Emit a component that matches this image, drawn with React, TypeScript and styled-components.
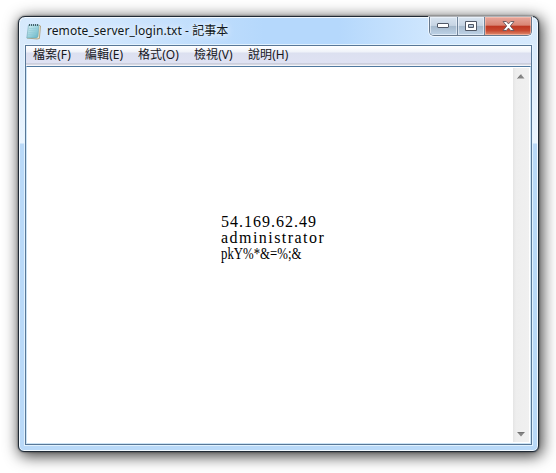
import React from "react";
import styled, { createGlobalStyle, css } from "styled-components";

const Global = createGlobalStyle`
  * { box-sizing: border-box; }
  body { margin: 0; background: #fff; overflow: hidden; font-family: "Noto Sans", "Noto Sans CJK TC", sans-serif; }
`;

const Desktop = styled.main`
  width: 556px;
  height: 473px;
  padding: 16px 17px 21px 18px;
  background: #fff;
`;

const Window = styled.section`
  width: 521px;
  height: 436px;
  display: flex;
  flex-direction: column;
  padding: 0 6px 6px;
  border: 1px solid #202a35;
  border-radius: 7px 7px 6px 6px;
  background:
    linear-gradient(#d5e9fc 0, #ddecfb 52px, #eaf5ff 126px, #b9d9f8 127px, #b9d9f8 100%) left / 7px 100% no-repeat,
    linear-gradient(#d5e9fc 0, #ddecfb 52px, #eaf5ff 126px, #b9d9f8 127px, #b9d9f8 100%) right / 7px 100% no-repeat,
    linear-gradient(90deg, #d7eafd 0, #d0e6fd 90px, #b5d8fc 245px, #b5d8fc 320px, #d0e7fe 415px, #d7eafd 100%) top / 100% 30px no-repeat,
    #b9d9f8;
  box-shadow:
    inset 0 0 0 1px rgba(247, 252, 255, 0.9),
    0 0 2px rgba(0, 0, 0, 0.65),
    2px 3px 15px 1px rgba(0, 0, 0, 0.78);
`;

const TitleBar = styled.header`
  height: 28px;
  flex: none;
  display: flex;
  align-items: flex-start;
  justify-content: space-between;
`;

const Title = styled.h1`
  display: flex;
  align-items: center;
  gap: 6px;
  margin: 2px 0 0 1px;
  height: 24px;
  font-size: 12px;
  font-weight: 400;
  line-height: 24px;
  color: #111820;
  white-space: nowrap;
  text-shadow: 0 0 8px #fff, 0 0 5px rgba(255, 255, 255, 0.7);
`;

const TitleText = styled.span`
  letter-spacing: 0.06px;
`;

const Controls = styled.div`
  display: flex;
  width: 103px;
  height: 19px;
  border: 1px solid #66788c;
  border-top: 0;
  border-radius: 0 0 5px 5px;
  overflow: hidden;
  box-shadow: 0 0 0 1px rgba(255, 255, 255, 0.65);
`;

const ControlButton = styled.button<{ $width: number; $close?: boolean }>`
  width: ${(p) => p.$width}px;
  flex: none;
  padding: 0;
  border: 0;
  border-right: 1px solid #70849a;
  display: grid;
  place-items: center;
  background: linear-gradient(#d8e4f0 0, #c7d5e4 47%, #a5b9cc 50%, #bdd2e7 100%);
  box-shadow: inset 0 0 0 1px rgba(244, 249, 255, 0.6);
  ${(p) =>
    p.$close &&
    css`
      border-right: 0;
      background: linear-gradient(#e7a79c 0, #d98574 46%, #bd3521 50%, #c84930 75%, #df8d70 100%);
      box-shadow: inset 0 0 0 1px rgba(255, 205, 190, 0.55);
    `}
`;

const Client = styled.div`
  flex: 1;
  display: flex;
  flex-direction: column;
  border: 1px solid #587797;
  box-shadow: 0 0 0 1px rgba(232, 246, 255, 0.85);
  background: #fff;
`;

const MenuBar = styled.nav`
  height: 20px;
  flex: none;
  display: flex;
  align-items: flex-start;
  gap: 14px;
  padding-left: 7px;
  background: linear-gradient(#fff 0, #eff2f9 6px, #dce0f0 7px, #dfe2f3 17px, #b8bbc9 18px, #f4f5fa 19px);
`;

const MenuItem = styled.span<{ $width: number }>`
  width: ${(p) => p.$width}px;
  font-size: 12px;
  line-height: 18px;
  letter-spacing: 0.08px;
  color: #17171d;
  white-space: nowrap;
`;

const Editor = styled.div`
  flex: 1;
  display: flex;
  border: 1px solid #cbe3f5;
  border-top-color: #4f789f;
  background: #fff;
`;

const Content = styled.pre`
  flex: 1;
  margin: 0;
  padding: 147px 0 0 194px;
  font-family: "Liberation Serif", serif;
  font-size: 16px;
  line-height: 16px;
  color: #000;
`;

const Line = styled.div<{ $spacing: number; $scale: number }>`
  height: 16px;
  letter-spacing: ${(p) => p.$spacing}px;
  transform: scaleX(${(p) => p.$scale});
  transform-origin: left;
`;

const Scrollbar = styled.div`
  width: 16px;
  margin: 1px 1px 1px 0;
  display: flex;
  flex-direction: column;
  justify-content: space-between;
  align-items: center;
  padding: 6px 0 5px;
  background: linear-gradient(90deg, #e5e5e5, #eeeeee 3px, #f0f0f0);
`;

function NotepadIcon() {
  return (
    <svg width="15" height="17" viewBox="0 0 15 17">
      <defs>
        <linearGradient id="page" x2="1" y2="1">
          <stop stopColor="#d7f1f5" />
          <stop offset="1" stopColor="#62b4c6" />
        </linearGradient>
      </defs>
      <path d="M12.7 2 14.5 3 13.4 15.5 11 16 1 15z" fill="#f2ead1" stroke="#a4895b" strokeWidth=".7" />
      <path d="M2.5 2H13L12 13.7 10.6 15H.8z" fill="url(#page)" stroke="#71a7b4" strokeWidth=".6" />
      <path d="M3 5.5h8M2.8 7.5h8M2.5 9.5h8M2.3 11.5h8" stroke="#8fc8d4" strokeWidth=".5" />
      <path d="M3.5 1v2M5.5 1v2M7.5 1v2M9.5 1v2M11.5 1v2" stroke="#46616b" />
    </svg>
  );
}

function ScrollArrow({ down = false }: { down?: boolean }) {
  return (
    <svg width="8" height="5" viewBox="0 0 8 5">
      <path d={down ? "M.5.5h7L4 4.5z" : "M4 .5 7.5 4.5h-7z"} fill="#858585" />
      <path d={down ? "M.5.5h7" : "M4 .5.5 4.5"} stroke="#555" strokeWidth=".7" />
    </svg>
  );
}

const menus = [
  { label: "檔案(F)", width: 38 },
  { label: "編輯(E)", width: 39 },
  { label: "格式(O)", width: 42 },
  { label: "檢視(V)", width: 40 },
  { label: "說明(H)", width: 42 },
];
const lines = [
  { text: "54.169.62.49", spacing: 1, scale: 1 },
  { text: "administrator", spacing: 1.45, scale: 1 },
  { text: "pkY%*&=%;&", spacing: 0, scale: 0.8 },
];

export default function App() {
  return (
    <>
      <Global />
      <Desktop>
        <Window>
          <TitleBar>
            <Title>
              <NotepadIcon />
              <TitleText>remote_server_login.txt - 記事本</TitleText>
            </Title>
            <Controls>
              <ControlButton $width={28} aria-label="最小化">
                <svg width="13" height="6" viewBox="0 0 13 6">
                  <rect x=".5" y=".5" width="11" height="4" rx=".5" fill="#fff" stroke="#505866" />
                </svg>
              </ControlButton>
              <ControlButton $width={27} aria-label="最大化">
                <svg width="12" height="11" viewBox="0 0 12 11">
                  <path fillRule="evenodd" d="M.5.5h11v9H.5zM3.5 3.5h5v3h-5z" fill="#fff" stroke="#505866" />
                </svg>
              </ControlButton>
              <ControlButton $width={46} $close aria-label="關閉">
                <svg width="13" height="11" viewBox="0 0 13 11">
                  <path d="M1 .5h3.3l2.2 2.4L8.7.5H12L8.3 5 12 9.5H8.7L6.5 7.1 4.3 9.5H1L4.7 5z" fill="#fff" stroke="#65565d" strokeWidth=".9" />
                </svg>
              </ControlButton>
            </Controls>
          </TitleBar>
          <Client>
            <MenuBar>
              {menus.map((m) => (
                <MenuItem key={m.label} $width={m.width}>{m.label}</MenuItem>
              ))}
            </MenuBar>
            <Editor>
              <Content>
                {lines.map((line) => (
                  <Line key={line.text} $spacing={line.spacing} $scale={line.scale}>{line.text}</Line>
                ))}
              </Content>
              <Scrollbar>
                <ScrollArrow />
                <ScrollArrow down />
              </Scrollbar>
            </Editor>
          </Client>
        </Window>
      </Desktop>
    </>
  );
}
